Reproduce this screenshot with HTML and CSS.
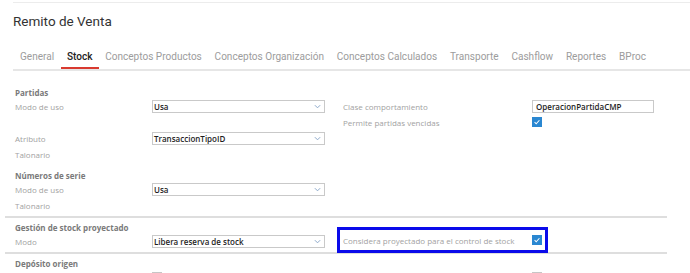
FILE: index.html
```html
<!DOCTYPE html>
<html lang="es">
<head>
  <meta charset="UTF-8" />
  <title>Remito de Venta</title>
  <link rel="stylesheet" href="styles.css">
</head>
<body>
  <div class="top-rule"></div>
  <h1 class="page-title">Remito de Venta</h1>

  <nav class="tabs">
    <a class="tab">General</a>
    <a class="tab active">Stock</a>
    <a class="tab">Conceptos Productos</a>
    <a class="tab">Conceptos Organización</a>
    <a class="tab">Conceptos Calculados</a>
    <a class="tab">Transporte</a>
    <a class="tab">Cashflow</a>
    <a class="tab">Reportes</a>
    <a class="tab">BProc</a>
  </nav>

  <form class="form">
    <section class="group">
      <h3 class="group-title">Partidas</h3>
      <div class="grid">
        <label class="lbl">Modo de uso</label>
        <div class="select"><span>Usa</span><svg class="chev" viewBox="0 0 8 5"><path d="M1 1l3 3 3-3" /></svg></div>
        <label class="lbl">Clase comportamiento</label>
        <div class="input">OperacionPartidaCMP</div>

        <label class="lbl col3">Permite partidas vencidas</label>
        <span class="check on"><svg viewBox="0 0 10 10"><path d="M2 5.2l2 2 4-4.4" /></svg></span>

        <label class="lbl">Atributo</label>
        <div class="select"><span>TransaccionTipoID</span><svg class="chev" viewBox="0 0 8 5"><path d="M1 1l3 3 3-3" /></svg></div>

        <label class="lbl col1">Talonario</label>
      </div>
    </section>

    <section class="group">
      <h3 class="group-title">Números de serie</h3>
      <div class="grid">
        <label class="lbl">Modo de uso</label>
        <div class="select"><span>Usa</span><svg class="chev" viewBox="0 0 8 5"><path d="M1 1l3 3 3-3" /></svg></div>

        <label class="lbl col1">Talonario</label>
      </div>
    </section>

    <section class="group ruled">
      <h3 class="group-title">Gestión de stock proyectado</h3>
      <div class="grid">
        <label class="lbl">Modo</label>
        <div class="select"><span>Libera reserva de stock</span><svg class="chev" viewBox="0 0 8 5"><path d="M1 1l3 3 3-3" /></svg></div>
        <div class="highlight">
          <label class="lbl wide">Considera proyectado para el control de stock</label>
          <span class="check on"><svg viewBox="0 0 10 10"><path d="M2 5.2l2 2 4-4.4" /></svg></span>
        </div>
      </div>
    </section>

    <section class="group ruled last">
      <h3 class="group-title">Depósito origen</h3>
      <div class="grid">
        <label class="lbl"></label>
        <div><span class="check"></span></div>
        <label class="lbl"></label>
        <span class="check"></span>
      </div>
    </section>
  </form>
</body>
</html>
```

FILE: styles.css
```css
body {
  margin: 0;
  height: 273px;
  background: #fff;
  font-family: 'Open Sans', sans-serif;
  overflow: hidden;
}
.top-rule {
  margin: 2px 0 0 13px;
  border-top: 1px solid #ececec;
}
.page-title {
  margin: 9px 0 0 13px;
  font-family: Roboto, sans-serif;
  font-weight: 400;
  font-size: 13.5px;
  line-height: 18px;
  color: #333;
}
.tabs {
  display: flex;
  margin: 19px 0 0 13px;
  border-bottom: 2px solid #e6e6e6;
}
.tab {
  padding: 0 6.4px 2px;
  font-family: Roboto, sans-serif;
  font-size: 10.05px;
  line-height: 16px;
  color: #9c9c9c;
  border-bottom: 2px solid transparent;
}
.tab:first-child {
  margin-left: 0.6px;
}
.tab.active {
  color: #222;
  font-weight: 500;
  border-bottom-color: #d93a30;
}
.form {
  margin: 16px 0 0 5px;
  width: 662px;
}
.group {
  padding: 0 0 3px 10px;
}
.group + .group {
  margin-top: 5px;
}
.group.ruled {
  margin-top: 0;
  border-top: 2px solid #dedede;
  padding-top: 4px;
}
.group.last {
  height: 16px;
  overflow: hidden;
}
.group-title {
  margin: 0;
  font-size: 8px;
  line-height: 11px;
  font-weight: 700;
  color: #7a7a7a;
}
.grid {
  display: grid;
  grid-template-columns: 137px 191px 189px 122px;
  grid-auto-rows: 16px;
  align-items: center;
}
.lbl {
  font-size: 8px;
  color: #a2a2a2;
  white-space: nowrap;
}
.col1 { grid-column: 1; }
.col3 { grid-column: 3; }
.select {
  display: flex;
  align-items: center;
  justify-content: space-between;
  width: 173px;
  height: 13px;
  box-sizing: border-box;
  border: 1px solid #c9c9c9;
  padding: 0 3px 0 1px;
  font-size: 8px;
  font-weight: 600;
  color: #1e1e1e;
}
.chev {
  width: 7px;
  height: 5px;
  fill: none;
  stroke: #88a6c8;
  stroke-width: 1.1;
}
.input {
  width: 122px;
  height: 13px;
  box-sizing: border-box;
  border: 1px solid #c9c9c9;
  padding: 0 3px;
  font-size: 8px;
  font-weight: 600;
  line-height: 11px;
  color: #1e1e1e;
}
.check {
  display: block;
  width: 10px;
  height: 10px;
  box-sizing: border-box;
  border: 1px solid #c6c6c6;
  background: #fff;
}
.check.on {
  border-color: #2a87d1;
  background: #2a87d1;
}
.check svg {
  display: block;
  width: 8px;
  height: 8px;
  fill: none;
  stroke: #fff;
  stroke-width: 1.3;
}
.highlight {
  grid-column: 3 / 5;
  display: flex;
  align-items: center;
  width: 199px;
  height: 14px;
  margin-top: -2px;
  outline: 3px solid #0b0bea;
  outline-offset: 3px;
}
.lbl.wide {
  width: 189px;
}
```
